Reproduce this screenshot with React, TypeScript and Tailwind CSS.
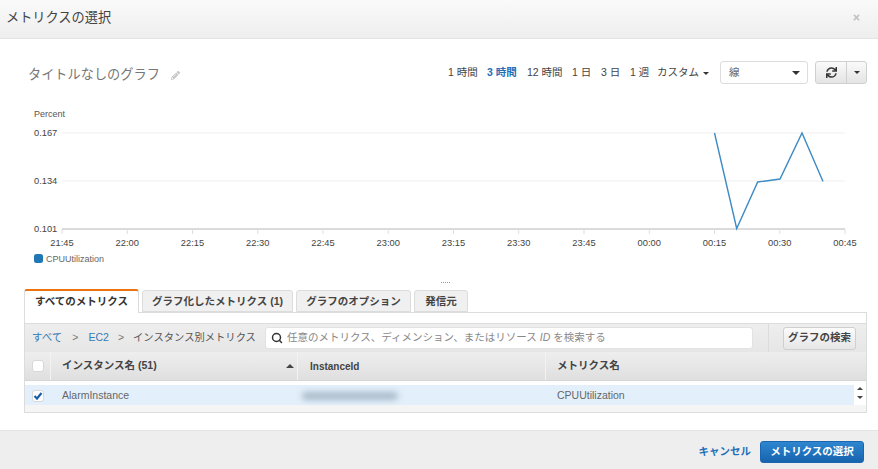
import { Search } from "lucide-react";
import { FaPencilAlt, FaSync, FaTimes } from "react-icons/fa";

const FONT = "font-['Liberation_Sans','Noto_Sans_CJK_JP',sans-serif]";

const ranges = [
  { label: "1 時間", className: "w-[39px]" },
  { label: "3 時間", className: "w-[40px] text-[#1f6fb8] font-bold" },
  { label: "12 時間", className: "w-[45px]" },
  { label: "1 日", className: "w-[29px]" },
  { label: "3 日", className: "w-[29px]" },
  { label: "1 週", className: "w-[27px]" },
];

const ticks = ["21:45", "22:00", "22:15", "22:30", "22:45", "23:00", "23:15", "23:30", "23:45", "00:00", "00:15", "00:30", "00:45"];

const Caret = ({ className = "border-x-[4px] border-t-[4px]" }: { className?: string }) => (
  <span className={`inline-block w-0 h-0 border-x-transparent border-t-[#333] ${className}`} />
);

const Chart = () => (
  <svg width="878" height="172" viewBox="0 100 878 172" className="block">
    <text x="34" y="117" fontSize="9" fill="#555">Percent</text>
    {[["0.167", 133], ["0.134", 181], ["0.101", 229]].map(([label, y]) => (
      <g key={label}>
        <text x="34" y={Number(y) + 3} fontSize="9.3" fill="#444">{label}</text>
        <line x1="62" x2="845" y1={y} y2={y} stroke={y === 229 ? "#cfcfcf" : "#efefef"} strokeWidth={y === 229 ? 1.5 : 1} />
      </g>
    ))}
    {ticks.map((t, i) => {
      const x = 62 + i * 65.25;
      return (
        <g key={t + i}>
          <line x1={x} x2={x} y1="229" y2="234" stroke="#dedede" />
          <text x={x} y="245.5" fontSize="9.3" fill="#444" textAnchor="middle">{t}</text>
        </g>
      );
    })}
    <polyline
      points="714.5,133 736.7,228.5 757.7,182 780,179 802,133 823,181.5"
      fill="none"
      stroke="#3d8bc4"
      strokeWidth="1.4"
    />
    <rect x="34" y="254" width="9" height="9" rx="2.5" fill="#1f77b4" />
    <text x="46" y="262" fontSize="9" fill="#666">CPUUtilization</text>
  </svg>
);

const tabs = [
  { label: "グラフ化したメトリクス (1)", w: "w-[151px]" },
  { label: "グラフのオプション", w: "w-[115px]" },
  { label: "発信元", w: "w-[54px]" },
];

export default function App() {
  return (
    <div className={`${FONT} w-[878px] h-[469px] flex flex-col bg-white overflow-hidden text-[#444]`}>
      {/* Header */}
      <div className="h-[39px] shrink-0 flex items-center justify-between pl-[6px] pr-[17px] pb-[3px] border-b border-[#e4e4e4] bg-gradient-to-b from-[#fafafa] to-[#eeeeee]">
        <h2 className="text-[13.2px] text-[#444]">メトリクスの選択</h2>
        <FaTimes className="w-[9px] h-[9px] text-[#c4c4c4]" />
      </div>

      {/* Graph title and controls */}
      <div className="h-[61px] shrink-0 flex items-start justify-between pl-[28px] pr-[11px] pt-[22px]">
        <div className="flex items-center gap-[11px] h-[24px] mt-[2px]">
          <span className="text-[13.2px] text-[#777]">タイトルなしのグラフ</span>
          <FaPencilAlt className="w-[9px] h-[9px] text-[#c4c4c4]" />
        </div>
        <div className="flex items-center">
          <div className="flex items-center pt-[1px] text-[10.5px] text-[#444]">
            {ranges.map((r) => (
              <span key={r.label} className={r.className}>{r.label}</span>
            ))}
            <span className="w-[63px] flex items-center gap-[4px]">
              カスタム <Caret className="border-x-[3px] border-t-[3px]" />
            </span>
          </div>
          <div className="w-[88px] h-[23px] flex items-center justify-between pl-[8px] pr-[7px] border border-[#dcdcdc] rounded-[3px] text-[10.5px] text-[#666]">
            線 <Caret />
          </div>
          <div className="ml-[7px] w-[52px] h-[23px] flex border border-[#d0d0d0] rounded-[3px] bg-gradient-to-b from-[#fafafa] to-[#e4e4e4]">
            <div className="w-[31px] flex items-center justify-center border-r border-[#d0d0d0]">
              <FaSync className="w-[11px] h-[11px] text-[#333]" />
            </div>
            <div className="flex-1 flex items-center justify-center">
              <Caret className="border-x-[3px] border-t-[3px]" />
            </div>
          </div>
        </div>
      </div>

      <Chart />

      {/* Drag handle */}
      <div className="h-[17px] shrink-0 flex justify-end pr-[428px] pt-[10px]">
        <div className="w-[9px] h-0 border-t border-dotted border-[#999]" />
      </div>

      {/* Tabs */}
      <div className="h-[23px] shrink-0 flex items-end gap-[3px] pl-[24px] relative z-10 text-[10.5px] font-bold">
        <div className="w-[115px] h-[24px] -mb-[1px] flex items-center justify-center bg-white border-x border-[#dcdcdc] border-t-2 border-t-[#ec7211] rounded-t-[3px] text-[#333]">
          すべてのメトリクス
        </div>
        {tabs.map((t) => (
          <div key={t.label} className={`${t.w} h-[22px] pt-[1px] flex items-center justify-center bg-[#f0f0f0] border border-[#dcdcdc] rounded-t-[3px] text-[#444]`}>
            {t.label}
          </div>
        ))}
      </div>

      {/* Metrics panel */}
      <div className="ml-[24px] w-[843px] h-[101px] shrink-0 border border-[#dcdcdc] bg-[#f5f5f5] text-[10.5px]">
        <div className="h-[10px] bg-white" />
        <div className="h-[29px] flex items-center border-t border-[#dddddd] bg-gradient-to-b from-[#eeeeee] to-[#e6e6e6]">
          <div className="w-[240px] flex items-center pl-[7px] text-[#555] whitespace-nowrap">
            <span className="text-[#337ab7]">すべて</span>
            <span className="mx-[10px] text-[#777]">&gt;</span>
            <span className="text-[#337ab7]">EC2</span>
            <span className="mx-[9px] text-[#777]">&gt;</span>
            <span className="text-[10.3px]">インスタンス別メトリクス</span>
          </div>
          <div className="w-[488px] h-[22px] flex items-center gap-[4px] pl-[5px] bg-white border border-[#e2e2e2] rounded-[3px] text-[#888]">
            <Search className="w-[12px] h-[12px] text-[#333]" strokeWidth={3} />
            <span>任意のメトリクス、ディメンション、またはリソース <i>ID</i> を検索する</span>
          </div>
          <div className="ml-[15px] h-full border-l border-[#dcdcdc]" />
          <button className="ml-[14px] w-[73px] h-[23px] flex items-center justify-center border border-[#cfcfcf] rounded-[3px] bg-gradient-to-b from-[#fbfbfb] to-[#e6e6e6] font-bold text-[#444]">
            グラフの検索
          </button>
        </div>
        <div className="h-[29px] flex items-stretch bg-gradient-to-b from-[#eeeeee] to-[#dfdfdf] border-b border-[#d5d5d5] font-bold text-[#444]">
          <div className="w-[26px] flex items-center pl-[7px] border-r border-[#f2f2f2]">
            <span className="w-[12px] h-[12px] bg-white border border-[#d8d8d8] rounded-[3px]" />
          </div>
          <div className="w-[247px] flex items-center justify-between pl-[11px] pr-[3px] border-r border-[#f2f2f2]">
            インスタンス名 (51)
            <span className="w-0 h-0 border-x-[4px] border-x-transparent border-b-[4px] border-b-[#444]" />
          </div>
          <div className="w-[248px] flex items-center pl-[12px] text-[10px] border-r border-[#f2f2f2]">InstanceId</div>
          <div className="flex-1 flex items-center pl-[11px]">メトリクス名</div>
        </div>
        <div className="h-[24px] flex bg-white pt-[4px]">
          <div className="flex-1 h-[20px] pt-[2px] flex items-center bg-[#e3f0fb] text-[#666]">
            <div className="w-[26px] pl-[7px]">
              <span className="w-[12px] h-[12px] flex items-center justify-center bg-white border border-[#d8d8d8] rounded-[3px]">
                <svg viewBox="0 0 10 10" className="w-[10px] h-[10px]">
                  <path d="M1.5 5 L4 7.5 L8.5 2" fill="none" stroke="#1a5fa8" strokeWidth="2.2" />
                </svg>
              </span>
            </div>
            <div className="w-[247px] pl-[11px]">AlarmInstance</div>
            <div className="w-[248px] pl-[4px]">
              <div className="w-[96px] h-[8px] rounded-full bg-[#a9b9c9] blur-[3px]" />
            </div>
            <div className="pl-[11px]">CPUUtilization</div>
          </div>
          <div className="w-[12px] -mt-[4px] flex flex-col items-center justify-center gap-[6px]">
            <span className="w-0 h-0 border-x-[3px] border-x-transparent border-b-[3px] border-b-[#444]" />
            <span className="w-0 h-0 border-x-[3px] border-x-transparent border-t-[3px] border-t-[#444]" />
          </div>
        </div>
      </div>

      {/* Footer */}
      <div className="mt-[17px] flex-1 flex items-center justify-end gap-[9px] pr-[14px] pt-[4px] bg-[#eeeeee] border-t border-[#e4e4e4]">
        <span className="text-[10.5px] font-bold text-[#1f6fb8]">キャンセル</span>
        <button className="w-[104px] h-[22px] flex items-center justify-center rounded-[3px] border border-[#1b66ae] bg-gradient-to-b from-[#2f86d0] to-[#1763ae] text-white text-[10.5px] font-bold">
          メトリクスの選択
        </button>
      </div>
    </div>
  );
}
